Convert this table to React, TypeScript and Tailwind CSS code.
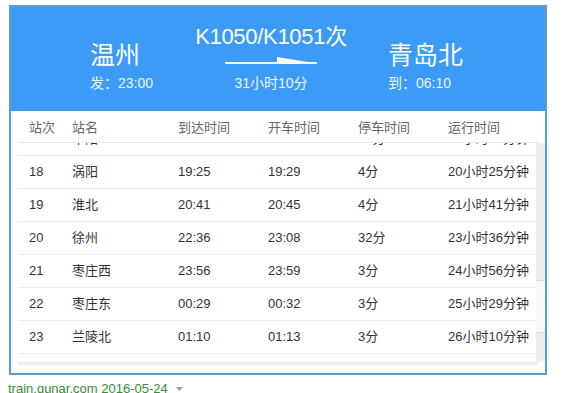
const rows = [
  { no: "17", name: "阜阳", arrive: "18:33", depart: "18:45", stop: "12分", run: "19小时45分钟" },
  { no: "18", name: "涡阳", arrive: "19:25", depart: "19:29", stop: "4分", run: "20小时25分钟" },
  { no: "19", name: "淮北", arrive: "20:41", depart: "20:45", stop: "4分", run: "21小时41分钟" },
  { no: "20", name: "徐州", arrive: "22:36", depart: "23:08", stop: "32分", run: "23小时36分钟" },
  { no: "21", name: "枣庄西", arrive: "23:56", depart: "23:59", stop: "3分", run: "24小时56分钟" },
  { no: "22", name: "枣庄东", arrive: "00:29", depart: "00:32", stop: "3分", run: "25小时29分钟" },
  { no: "23", name: "兰陵北", arrive: "01:10", depart: "01:13", stop: "3分", run: "26小时10分钟" },
];

const cols = "grid grid-cols-[43px_106px_90px_90px_90px_1fr] pl-[11px]";

function Arrow() {
  return (
    <svg width="152" height="10" viewBox="0 0 152 10" className="block">
      <rect x="30" y="5" width="92" height="2" fill="#fff" />
      <polygon points="82,0 122,6.5 82,5" fill="#fff" />
    </svg>
  );
}

export default function App() {
  return (
    <div className="h-[393px] w-[576px] overflow-hidden bg-white font-['Liberation_Sans','Noto_Sans_CJK_SC',sans-serif]">
      <div className="ml-[9px] mt-[5px] flex h-[370px] w-[538px] flex-col border-2 border-[#5b9dd0] bg-white">
        {/* header */}
        <div className="flex h-[104px] bg-[#3d9bf8] pl-[79px] text-white">
          <div className="w-[105px] pt-[33px]">
            <div className="text-[25px] leading-[30px]">温州</div>
            <div className="mt-[4px] text-[14px] leading-[18px] text-[#eef6ff]">发：23:00</div>
          </div>
          <div className="flex w-[152px] flex-col items-center pt-[17px]">
            <div className="whitespace-nowrap text-[22px] leading-[26px] tracking-[-0.3px]">K1050/K1051次</div>
            <div className="mt-[7px]">
              <Arrow />
            </div>
            <div className="mt-[7px] whitespace-nowrap text-[14px] leading-[18px] text-[#eef6ff]">31小时10分</div>
          </div>
          <div className="ml-[41px] pt-[33px]">
            <div className="text-[25px] leading-[30px]">青岛北</div>
            <div className="mt-[4px] text-[14px] leading-[18px] text-[#eef6ff]">到：06:10</div>
          </div>
        </div>

        {/* table */}
        <div className="px-[7px] text-[13px]">
          <div className={`${cols} h-[32px] items-center border-b border-[#e6e6e6] pt-[2px] text-[#666]`}>
            <div>站次</div>
            <div>站名</div>
            <div>到达时间</div>
            <div>开车时间</div>
            <div>停车时间</div>
            <div>运行时间</div>
          </div>
          <div className="flex h-[219px]">
            <div className="flex-1 overflow-hidden">
              <div className="-mt-[20px] text-[#333]">
                {rows.map((r) => (
                  <div key={r.no} className={`${cols} h-[33px] items-center border-b border-[#ececec]`}>
                    <div>{r.no}</div>
                    <div>{r.name}</div>
                    <div>{r.arrive}</div>
                    <div>{r.depart}</div>
                    <div>{r.stop}</div>
                    <div>{r.run}</div>
                  </div>
                ))}
              </div>
            </div>
            <div className="-mr-[7px] flex w-[9px] flex-col bg-[#eeeeee]">
              <div className="h-[137px]" />
              <div className="h-[53px] border-y border-[#dcdcdc] bg-[#f9f9f9]" />
            </div>
          </div>
          <div className="h-[5px] bg-gradient-to-b from-[#e6e6e6] to-white" />
        </div>
      </div>
      <div className="ml-[8px] mt-[6px] flex items-center gap-[8px] text-[13px] leading-[16px] text-[#3a8a36]">
        <span>train.qunar.com 2016-05-24</span>
        <svg width="7" height="4" viewBox="0 0 7 4">
          <polygon points="0,0 7,0 3.5,4" fill="#9a9a9a" />
        </svg>
      </div>
    </div>
  );
}
